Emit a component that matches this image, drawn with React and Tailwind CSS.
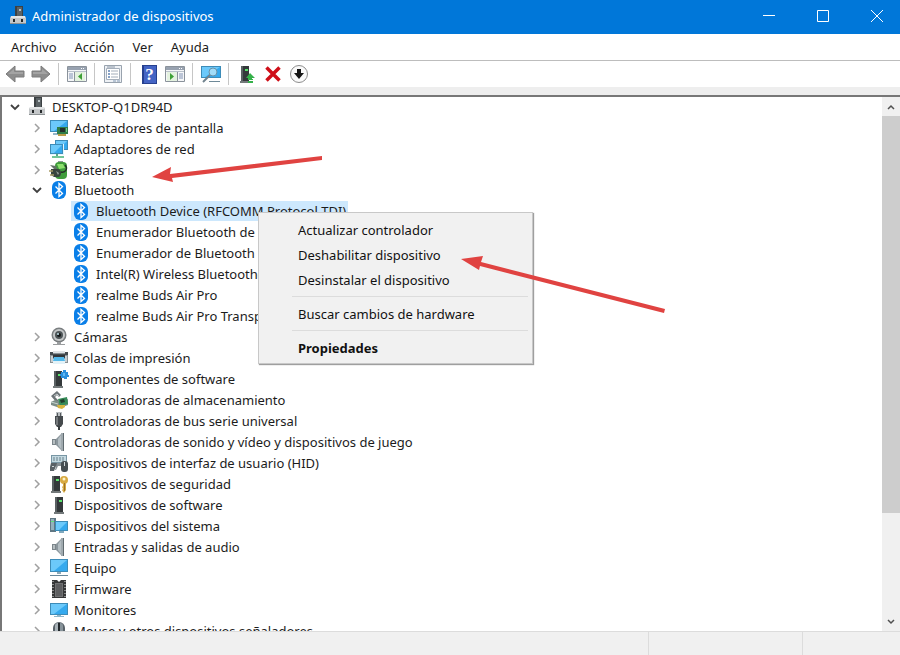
import { useState } from 'react';

const MENUS = ["Archivo", "Acción", "Ver", "Ayuda"];

const TREE = [
  { label: "Adaptadores de pantalla", icon: "display" },
  { label: "Adaptadores de red", icon: "network" },
  { label: "Baterías", icon: "battery" },
  {
    label: "Bluetooth",
    icon: "bluetooth",
    children: [
      "Bluetooth Device (RFCOMM Protocol TDI)",
      "Enumerador Bluetooth de",
      "Enumerador de Bluetooth",
      "Intel(R) Wireless Bluetooth(R)",
      "realme Buds Air Pro",
      "realme Buds Air Pro Transport",
    ],
  },
  { label: "Cámaras", icon: "camera" },
  { label: "Colas de impresión", icon: "printer" },
  { label: "Componentes de software", icon: "component" },
  { label: "Controladoras de almacenamiento", icon: "storage" },
  { label: "Controladoras de bus serie universal", icon: "usb" },
  { label: "Controladoras de sonido y vídeo y dispositivos de juego", icon: "speaker" },
  { label: "Dispositivos de interfaz de usuario (HID)", icon: "hid" },
  { label: "Dispositivos de seguridad", icon: "security" },
  { label: "Dispositivos de software", icon: "tower" },
  { label: "Dispositivos del sistema", icon: "system" },
  { label: "Entradas y salidas de audio", icon: "speaker" },
  { label: "Equipo", icon: "computer" },
  { label: "Firmware", icon: "firmware" },
  { label: "Monitores", icon: "monitor" },
  { label: "Mouse y otros dispositivos señaladores", icon: "mouse" },
];

const Tower = ({ x = 6 }) => (
  <g>
    <path d={`M${x} 2h8v16h-8z`} fill="#34393b" />
    <path d={`M${x} 2h2v16h-2z`} fill="#5a6163" />
    <path d={`M${x + 4} 5h3v2h-3z`} fill="#59e36c" />
    <path d={`M${x - 1} 17h10v2h-10z`} fill="#73797a" />
  </g>
);

const Screen = ({ x, y, w, h }) => (
  <g>
    <rect x={x} y={y} width={w} height={h} fill="#3d8cb8" />
    <rect x={x + 1} y={y + 1} width={w - 2} height={h - 2} fill="#35a9ee" />
    <path d={`M${x + 1} ${y + 1}h${w - 2}l-${w - 5} ${h - 2}h-3z`} fill="#6cc9fa" />
  </g>
);

const ICONS = {
  root: (
    <>
      <path d="M7 0h8v11H7z" fill="#3c4143" />
      <path d="M9 1h5v9H9z" fill="#5b6265" />
      <path d="M11 3h2v2h-2z" fill="#b9c2c4" />
      <path d="M3 10h14l1 2v6H2v-6z" fill="#c4c7c9" />
      <path d="M3 10h14v2H3z" fill="#e3e5e6" />
      <path d="M5 13h2v3H5zM13 13h2v3h-2z" fill="#25292b" />
      <path d="M2 17h16v1H2z" fill="#8b9092" />
    </>
  ),
  display: (
    <>
      <Screen x={1} y={2} w={18} h={12} />
      <path d="M4 15h6v2H4z" fill="#93b5c8" />
      <path d="M8 9h11v7H8z" fill="#2f7d4a" />
      <path d="M11 10h5v4h-5z" fill="#24312c" />
      <path d="M9 16h8v2H9z" fill="#b79c46" />
      <path d="M17 10h1v4h-1z" fill="#75c78b" />
    </>
  ),
  network: (
    <>
      <Screen x={6} y={1} w={13} h={10} />
      <path d="M1 5h14v11H1z" fill="#e3f6ff" />
      <Screen x={1} y={5} w={13} h={10} />
      <path d="M7 15h2v2H7z" fill="#56a986" />
      <path d="M3 17h12v2H3z" fill="#72c598" />
    </>
  ),
  battery: (
    <>
      <path d="M9 1h5v2H9z" fill="#8e9994" />
      <rect x="6" y="2" width="12" height="17" rx="4" fill="#3f9c3c" />
      <path d="M8 4h6l2 4-6 1z" fill="#8ce06d" />
      <path d="M16 5c3 3 1 8-4 7" fill="none" stroke="#253029" strokeWidth="1.5" />
      <path d="M1 5l6 1 1 3H5z" fill="#627066" />
      <path d="M2 9h7c4 0 4 8 0 8H5l-3-2z" fill="#39443d" />
      <path d="M0 11h4M1 15h4" stroke="#a99c67" strokeWidth="1.5" />
      <path d="M7 11l3 2-1 2z" fill="#9ca49e" />
    </>
  ),
  bluetooth: (
    <>
      <rect x="3" y="1" width="14" height="18" rx="6" fill="#0a7fe8" />
      <path d="M6.500 6.500l7 7-3.500 3v-13l3.500 3-7 7" fill="none" stroke="#fff" strokeWidth="1.300" />
    </>
  ),
  camera: (
    <>
      <circle cx="10" cy="8" r="7.500" fill="#7a7e80" />
      <circle cx="10" cy="8" r="6" fill="#c4c7c8" />
      <circle cx="10" cy="8" r="4" fill="#4d5457" />
      <circle cx="10" cy="8" r="2" fill="#121617" />
      <path d="M8 6h2v2H8z" fill="#9bb4bb" />
      <path d="M8 15h4v2h4v1H4v-1h4z" fill="#9a9d9f" />
    </>
  ),
  printer: (
    <>
      <path d="M4 3h12v4H4z" fill="#dfe3e5" />
      <path d="M1 5h18v10h-3v-4H4v4H1z" fill="#8a9195" />
      <path d="M1 4h3v2h12V4h3v3H1z" fill="#454b4e" />
      <path d="M2 8h2v6H2zM16 8h2v6h-2z" fill="#c9ced0" />
      <path d="M4 7h12v3H4z" fill="#30363a" />
      <path d="M5 9h10l1 4H4z" fill="#52b8ea" />
      <path d="M4 13h12v3H4z" fill="#e3f2f8" />
    </>
  ),
  component: (
    <>
      <Tower x={5} />
      <path d="M12 3h2V1h3v2h2v3h1v2h-2v2h-3V9h-3V7h-1V5h1z" fill="#2c8fdc" />
      <path d="M14 4h2v3h-2z" fill="#62baf5" />
    </>
  ),
  storage: (
    <>
      <path d="M2 6l6-5 4 4-2 2-2-2-2 2 4 4-2 2z" fill="#6d7477" />
      <path d="M5 6l3-2 2 2" fill="none" stroke="#c1c7c9" />
      <path d="M2 12l4-2 6 2 7-3v6l-8 3-9-3z" fill="#7c8e88" />
      <path d="M9 9l9-2 1 7-8 2z" fill="#368b58" />
      <path d="M11 10l4-1 1 3-4 1z" fill="#203d2d" />
      <path d="M8 15h8v2l-3 2-4-1z" fill="#d7b43f" />
      <path d="M2 12l7 2" stroke="#c5d4ce" />
    </>
  ),
  usb: (
    <>
      <path d="M7 1h6v5H7z" fill="#b9bec1" />
      <path d="M8 2h1v3H8zM11 2h1v3h-1z" fill="#54595c" />
      <path d="M6 5h8v8l-2 3H8l-2-3z" fill="#454a4d" />
      <path d="M7 6h2v8H7z" fill="#75797c" />
      <path d="M9 15h2v4H9z" fill="#393e40" />
    </>
  ),
  speaker: (
    <>
      <path d="M3 7h4v6H3z" fill="#7c868b" />
      <path d="M4 8h2v4H4z" fill="#b6bec1" />
      <path d="M7 7l6-6v18l-6-6z" fill="#8c979d" />
      <path d="M9 7l3-4v14l-3-4z" fill="#b4bec3" />
      <path d="M12 1h3v18h-3z" fill="#a0aaaf" />
      <path d="M14 1h1v18h-1z" fill="#606b70" />
    </>
  ),
  hid: (
    <>
      <path d="M2 2h16v8H2z" fill="#7896a4" />
      <path d="M3 3h14v6H3z" fill="#c4d9e1" />
      <path d="M4 5h12M4 7h12" stroke="#69818b" strokeDasharray="2 1" />
      <path d="M2 10h8v3H7l-2 5H1v-4z" fill="#596166" />
      <path d="M8 10h6l1 3H9l-2 4H6z" fill="#858e93" />
      <rect x="12" y="8" width="7" height="11" rx="3" fill="#464e52" />
      <path d="M15 9h1v4h-1zM3 13h2v1H3z" fill="#d2d9dc" />
    </>
  ),
  security: (
    <>
      <Tower x={3} />
      <circle cx="15" cy="6" r="4" fill="#d8aa42" />
      <circle cx="15" cy="5" r="1.500" fill="#fff3c8" />
      <path d="M14 9h3v7l-2 3-2-3 1-1-1-2 1-1z" fill="#d8aa42" />
      <path d="M15 9h1v8h-1z" fill="#9a702c" />
    </>
  ),
  tower: <Tower x={6} />,
  system: (
    <>
      <path d="M1 2h6v14H1z" fill="#607783" />
      <path d="M2 3h3v11H2z" fill="#94b1bd" />
      <path d="M2 5h3v1H2z" fill="#5ee678" />
      <Screen x={6} y={5} w={13} h={10} />
      <path d="M10 15h5v2h-5z" fill="#80a8bd" />
    </>
  ),
  computer: (
    <>
      <Screen x={1} y={1} w={18} h={13} />
      <path d="M8 14h4v2H8z" fill="#8ca9b8" />
      <path d="M1 17h18v1H1z" fill="#69889a" />
    </>
  ),
  firmware: (
    <>
      <path d="M3 1h5l2 2 2-2h5v18H3z" fill="#353637" />
      <path d="M6 4h8v14H6z" fill="#707172" />
      <path d="M4 2v17M16 2v17" stroke="#e4e4e4" strokeDasharray="1 2" />
      <path d="M7 5h6v12H7z" fill="#5d5e60" />
    </>
  ),
  monitor: (
    <>
      <Screen x={1} y={3} w={18} h={12} />
      <path d="M8 15h4v1h3v1H5v-1h3z" fill="#8eb6ca" />
    </>
  ),
  mouse: (
    <>
      <rect x="4" y="1" width="12" height="18" rx="6" fill="#596269" />
      <path d="M6 5c0-2 1-3 3-3v8H6z" fill="#a9b3b9" />
      <path d="M14 5c0-2-1-3-3-3v8h3z" fill="#88949b" />
      <path d="M9 2h2v8H9z" fill="#22282c" />
    </>
  ),
};

const Icon = ({ name }) => (
  <svg viewBox="0 0 20 20" className="size-5 shrink-0" aria-hidden="true">{ICONS[name]}</svg>
);

const Arrow = ({ flip }) => (
  <svg viewBox="0 0 20 18" className={`w-5 h-[18px] ${flip ? '-scale-x-100' : ''}`} aria-hidden="true">
    <path d="M1 9l9-8v5h9v6h-9v5z" fill="#8d8d8d" stroke="#7c7c7c" />
    <path d="M3 9l6-5v3h9v2z" fill="#a3a3a3" />
  </svg>
);

const PanelIcon = ({ flip }) => (
  <svg viewBox="0 0 20 18" className="w-5 h-[18px]" aria-hidden="true">
    <path d="M.500 1.500h19v15H.500z" fill="#f5f6f8" stroke="#8a929b" />
    <path d="M1 2h18v3H1z" fill="#98a2b0" />
    <path d="M14 3.500h1M16 3.500h1" stroke="#fff" />
    <path d="M1 6.500h18" stroke="#b8c0ca" />
    {flip ? (
      <>
        <path d="M2 7h11v9H2z" fill="#e4f2df" />
        <path d="M12.500 7v9" stroke="#8a929b" />
        <path d="M14 9h4M14 11h4M14 13h4" stroke="#8294b5" />
        <path d="M5 8v7l4-3.500z" fill="#3ea036" />
      </>
    ) : (
      <>
        <path d="M8 7h10v9H8z" fill="#e4f2df" />
        <path d="M7.500 7v9" stroke="#8a929b" />
        <path d="M2 9h4M2 11h4M2 13h4" stroke="#8294b5" />
        <path d="M15 8v7l-4-3.500z" fill="#3ea036" />
      </>
    )}
  </svg>
);

const TOOLBAR = [
  [
    { label: "Atrás", icon: <Arrow /> },
    { label: "Adelante", icon: <Arrow flip /> },
  ],
  [{ label: "Mostrar u ocultar árbol", icon: <PanelIcon /> }],
  [
    {
      label: "Propiedades",
      icon: (
        <svg viewBox="0 0 18 20" className="w-[18px] h-5" aria-hidden="true">
          <path d="M.500 1.500h17v17H.500z" fill="#eef1f5" stroke="#99a3ae" />
          <path d="M2.500 4.500h13v11h-13z" fill="#fff" stroke="#a5afbb" />
          <path d="M3 3h8" stroke="#8996a6" />
          <path d="M4 7h2M4 10h2M4 13h2" stroke="#5e83b5" strokeWidth="1.500" />
          <path d="M7 7h7M7 10h7M7 13h7" stroke="#a3aebb" />
          <path d="M9 17h3M13 17h3" stroke="#8299b4" />
        </svg>
      ),
    },
  ],
  [
    {
      label: "Ayuda",
      icon: (
        <span className="flex w-[15px] h-[19px] items-center justify-center border border-[#26408f] border-l-2 bg-[#4464c4] font-['Liberation_Serif',serif] text-[17px] leading-none font-bold text-white">?</span>
      ),
    },
    { label: "Mostrar panel de acciones", icon: <PanelIcon flip /> },
  ],
  [
    {
      label: "Buscar cambios de hardware",
      icon: (
        <svg viewBox="0 0 20 20" className="size-5" aria-hidden="true">
          <Screen x={0} y={2} w={20} h={12} />
          <path d="M8 17h11v1H8z" fill="#6e8998" />
          <circle cx="12" cy="8" r="4" fill="#a2dcf8" stroke="#6792aa" />
          <path d="M9 11l-7 7" stroke="#71838e" strokeWidth="2" />
        </svg>
      ),
    },
  ],
  [
    {
      label: "Actualizar controlador",
      icon: (
        <svg viewBox="0 0 20 20" className="size-5" aria-hidden="true">
          <Tower x={4} />
          <path d="M13 9l5 5h-3v1h-4v-1H9z" fill="#35b14a" />
          <path d="M11 15h5v1h-5zM11 17h5v2h-5z" fill="#35b14a" />
        </svg>
      ),
    },
    {
      label: "Desinstalar dispositivo",
      icon: (
        <svg viewBox="0 0 16 16" className="size-4" aria-hidden="true">
          <path d="M1.500 1.500l13 13M14.500 1.500l-13 13" stroke="#cf0f19" strokeWidth="3.500" />
        </svg>
      ),
    },
    {
      label: "Deshabilitar dispositivo",
      icon: (
        <svg viewBox="0 0 20 20" className="size-5" aria-hidden="true">
          <circle cx="10" cy="10" r="8.500" fill="#fafafa" stroke="#8d8d8d" />
          <path d="M8 5h4v4h3l-5 6-5-6h3z" fill="#161616" />
        </svg>
      ),
    },
  ],
];

const CONTEXT_MENU = [
  ["Actualizar controlador", "Deshabilitar dispositivo", "Desinstalar el dispositivo"],
  ["Buscar cambios de hardware"],
  ["Propiedades"],
];

const Chevron = ({ open }) => (
  <svg viewBox="0 0 10 10" className="size-[10px]" fill="none" aria-hidden="true">
    {open
      ? <path d="M1 3l4 4 4-4" stroke="#404040" strokeWidth="1.800" />
      : <path d="M3 1l4 4-4 4" stroke="#a0a0a0" strokeWidth="1.500" />}
  </svg>
);

// Expanded branches are one pixel shorter than closed ones
const Row = ({ label, icon, open, onToggle, selected }) => (
  <div className={`flex items-center ${open ? 'h-5' : 'h-[21px]'}`}>
    {onToggle ? (
      <button onClick={onToggle} aria-label={`Expandir ${label}`} className="flex w-[25px] shrink-0 justify-center">
        <Chevron open={open} />
      </button>
    ) : (
      <span className="w-[25px] shrink-0" />
    )}
    <span className={`flex h-5 items-center gap-[5px] pr-0.5 whitespace-nowrap ${selected ? 'bg-[#cde8fd]' : ''}`}>
      <Icon name={icon} />
      {label}
    </span>
  </div>
);

const DeviceTree = () => {
  const [open, setOpen] = useState({ root: true, Bluetooth: true });
  const toggle = key => setOpen({ ...open, [key]: !open[key] });

  return (
    <ul className="min-w-0 flex-1 overflow-hidden">
      <li>
        <Row label="DESKTOP-Q1DR94D" icon="root" open={open.root} onToggle={() => toggle("root")} />
        {open.root && (
          <ul className="pl-[22px]">
            {TREE.map(node => (
              <li key={node.label}>
                <Row label={node.label} icon={node.icon} open={open[node.label]} onToggle={() => toggle(node.label)} />
                {node.children && open[node.label] && (
                  <ul className="pl-[22px]">
                    {node.children.map((child, i) => (
                      <li key={child}>
                        <Row label={child} icon="bluetooth" selected={i === 0} />
                      </li>
                    ))}
                  </ul>
                )}
              </li>
            ))}
          </ul>
        )}
      </li>
    </ul>
  );
};

const ScrollBar = () => (
  <div className="flex w-[18px] shrink-0 flex-col bg-[#f0f0f0]">
    <button aria-label="Subir" className="flex h-[19px] items-center justify-center">
      <svg viewBox="0 0 10 10" className="size-[10px]" fill="none"><path d="M2 7l3-3 3 3" stroke="#505050" strokeWidth="1.500" /></svg>
    </button>
    <div className="min-h-0 flex-1">
      <div className="h-4/5 bg-[#cdcdcd]" />
    </div>
    <button aria-label="Bajar" className="flex h-[19px] items-center justify-center">
      <svg viewBox="0 0 10 10" className="size-[10px]" fill="none"><path d="M2 3l3 3 3-3" stroke="#505050" strokeWidth="1.500" /></svg>
    </button>
  </div>
);

const App = () => (
  <div className="relative flex h-screen flex-col overflow-hidden bg-white font-['Noto_Sans',sans-serif] text-[13px] leading-5 text-[#1c1c1c]">
    <header className="flex h-[34px] shrink-0 items-center justify-between bg-[#0077d9] pb-0.5 pl-2 text-white">
      <div className="flex items-center gap-1">
        <Icon name="root" />
        <h1>Administrador de dispositivos</h1>
      </div>
      <div className="flex h-full gap-2">
        <button aria-label="Minimizar" className="flex w-[46px] items-center justify-center">
          <svg viewBox="0 0 12 12" className="size-3"><path d="M0 5.500h12" stroke="#fff" /></svg>
        </button>
        <button aria-label="Maximizar" className="flex w-[46px] items-center justify-center">
          <svg viewBox="0 0 12 12" className="size-3" fill="none"><path d="M.500.500h11v11H.500z" stroke="#fff" /></svg>
        </button>
        <button aria-label="Cerrar" className="flex w-[46px] items-center justify-center">
          <svg viewBox="0 0 12 12" className="size-3"><path d="M0 0l12 12M12 0L0 12" stroke="#fff" /></svg>
        </button>
      </div>
    </header>

    <nav className="flex h-[27px] shrink-0 items-center gap-[18px] border-b border-[#bdbdbd] pl-[11px]">
      {MENUS.map(m => <button key={m}>{m}</button>)}
    </nav>

    <div className="flex h-[26px] shrink-0 items-center pl-0.5">
      {TOOLBAR.map((group, i) => (
        <div key={i} className="flex items-center">
          {i > 0 && <span className="mr-[5px] ml-1 h-[22px] w-px bg-[#c6c6c6]" />}
          {group.map(tool => (
            <button key={tool.label} aria-label={tool.label} className="flex w-[26px] items-center justify-center">
              {tool.icon}
            </button>
          ))}
        </div>
      ))}
    </div>

    <div className="h-2 shrink-0 bg-[#eee]" />

    <main className="flex min-h-0 flex-1 border-t-2 border-l-2 border-[#777]">
      <DeviceTree />
      <ScrollBar />
    </main>

    <footer className="flex h-6 shrink-0 border-t border-[#dcdcdc] bg-[#f0f0f0]">
      <div className="flex-1" />
      <div className="w-[154px] border-l border-[#dcdcdc]" />
      <div className="w-[98px] border-l border-[#dcdcdc]" />
    </footer>

    {/* Context menu of the selected device */}
    <div role="menu" className="absolute top-[212px] left-[258px] w-[275px] border border-[#c8c8c8] bg-[#f1f1f1] pt-1 pb-[3px] text-[#111] shadow-[1px_1px_1px_#00000060]">
      {CONTEXT_MENU.map((group, i) => (
        <div key={i} className={i > 0 ? "before:my-1 before:mr-1 before:ml-[33px] before:block before:h-px before:bg-[#dcdcdc]" : ""}>
          {group.map(item => (
            <button
              key={item}
              role="menuitem"
              className={`block h-[25px] w-full pl-[39px] text-left ${item === "Propiedades" ? 'font-bold' : ''}`}
            >
              {item}
            </button>
          ))}
        </div>
      ))}
    </div>

    {/* Red pointers */}
    <svg viewBox="0 0 900 655" className="pointer-events-none absolute top-0 left-0 h-[655px] w-[900px]" aria-hidden="true">
      <g fill="#e04341">
        <path d="M322 156v4L172 178l1 4-21-5 19-10-1 7z" />
        <path d="M665 309l-1 4L480 266l-1 4-18-11 22-3-2 6z" />
      </g>
    </svg>
  </div>
);

export default App;
